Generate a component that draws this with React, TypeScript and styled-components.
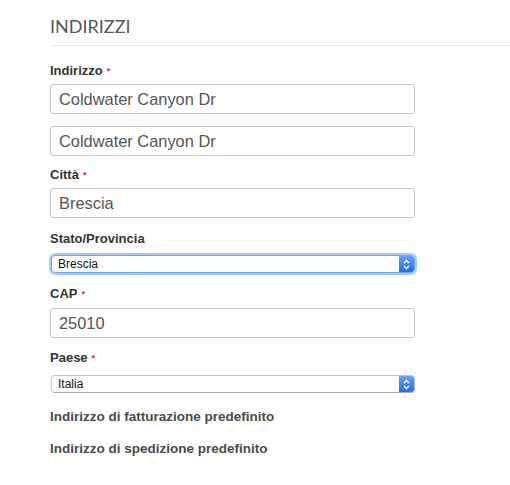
import React from "react";
import styled, { createGlobalStyle } from "styled-components";

const Global = createGlobalStyle`
  html, body { margin: 0; padding: 0; background: #fff; }
  body { font-family: "Liberation Sans", Arial, sans-serif; }
`;

const Page = styled.div`
  padding: 14px 0 0 50px;
  display: flex;
  flex-direction: column;
`;

const Heading = styled.h2`
  margin: 0;
  font-family: Lato, "Liberation Sans", sans-serif;
  font-weight: 400;
  font-size: 18px;
  line-height: 24px;
  color: #585858;
  letter-spacing: 0;
  padding-bottom: 7px;
  border-bottom: 1px solid #e6e6e6;
`;

const Form = styled.div`
  display: flex;
  flex-direction: column;
  width: 365px;
  padding-top: 16px;
`;

const Group = styled.div<{ $gap?: number }>`
  display: flex;
  flex-direction: column;
  margin-bottom: ${(p) => p.$gap ?? 10}px;
`;

const Label = styled.label<{ $mb?: number }>`
  font-size: 13px;
  font-weight: 700;
  line-height: 18px;
  color: #333;
  margin-bottom: ${(p) => p.$mb ?? 4}px;
`;

const Req = styled.span`
  color: #e02b27;
  font-size: 9px;
  margin-left: 4px;
  vertical-align: top;
`;

const Input = styled.div<{ $mt?: number }>`
  box-sizing: border-box;
  height: 30px;
  border: 1px solid #c6c6c6;
  border-radius: 3px;
  padding: 0 8px;
  display: flex;
  align-items: center;
  font-size: 16.4px;
  color: #555;
  margin-top: ${(p) => p.$mt ?? 0}px;
`;

const SelectBox = styled.div<{ $focus?: boolean }>`
  box-sizing: border-box;
  height: 18px;
  margin: 0 0 0 1px;
  border: 1px solid ${(p) => (p.$focus ? "#6aa5f6" : "#c4c4c4")};
  border-bottom-color: ${(p) => (p.$focus ? "#6aa5f6" : "#a9a9a9")};
  border-radius: 4px;
  display: flex;
  align-items: center;
  font-size: 12px;
  color: #111;
  box-shadow: ${(p) => (p.$focus ? "0 0 0 2px #a9cbfb" : "none")};
  overflow: hidden;
  width: 364px;
`;

const SelectText = styled.span`
  flex: 1;
  padding-left: 6px;
`;

const Stepper = styled.div`
  width: 15px;
  height: 100%;
  background: linear-gradient(#5fa3fb, #1c6ef8);
  display: flex;
  align-items: center;
  justify-content: center;
`;

const CheckLabel = styled.div<{ $mt: number }>`
  font-size: 13.5px;
  font-weight: 700;
  color: #4a4a4a;
  line-height: 18px;
  margin-top: ${(p) => p.$mt}px;
`;

const Arrows = () => (
  <svg width="9" height="11" viewBox="0 0 9 11">
    <path d="M2 4 L4.5 1.5 L7 4 M2 7 L4.5 9.5 L7 7" stroke="#fff" strokeWidth="1.4" fill="none" />
  </svg>
);

const Select = ({ value, focus }: { value: string; focus?: boolean }) => (
  <SelectBox $focus={focus}>
    <SelectText>{value}</SelectText>
    <Stepper>
      <Arrows />
    </Stepper>
  </SelectBox>
);

export default function App() {
  return (
    <>
      <Global />
      <Page>
        <Heading>INDIRIZZI</Heading>
        <Form>
          <Group $gap={10}>
            <Label>
              Indirizzo<Req>*</Req>
            </Label>
            <Input>Coldwater Canyon Dr</Input>
            <Input $mt={12}>Coldwater Canyon Dr</Input>
          </Group>
          <Group $gap={12}>
            <Label>
              Città<Req>*</Req>
            </Label>
            <Input>Brescia</Input>
          </Group>
          <Group $gap={12}>
            <Label $mb={7}>Stato/Provincia</Label>
            <Select value="Brescia" focus />
          </Group>
          <Group $gap={11}>
            <Label $mb={5}>
              CAP<Req>*</Req>
            </Label>
            <Input>25010</Input>
          </Group>
          <Group $gap={0}>
            <Label $mb={8}>
              Paese<Req>*</Req>
            </Label>
            <Select value="Italia" />
          </Group>
          <CheckLabel $mt={15}>Indirizzo di fatturazione predefinito</CheckLabel>
          <CheckLabel $mt={14}>Indirizzo di spedizione predefinito</CheckLabel>
        </Form>
      </Page>
    </>
  );
}
